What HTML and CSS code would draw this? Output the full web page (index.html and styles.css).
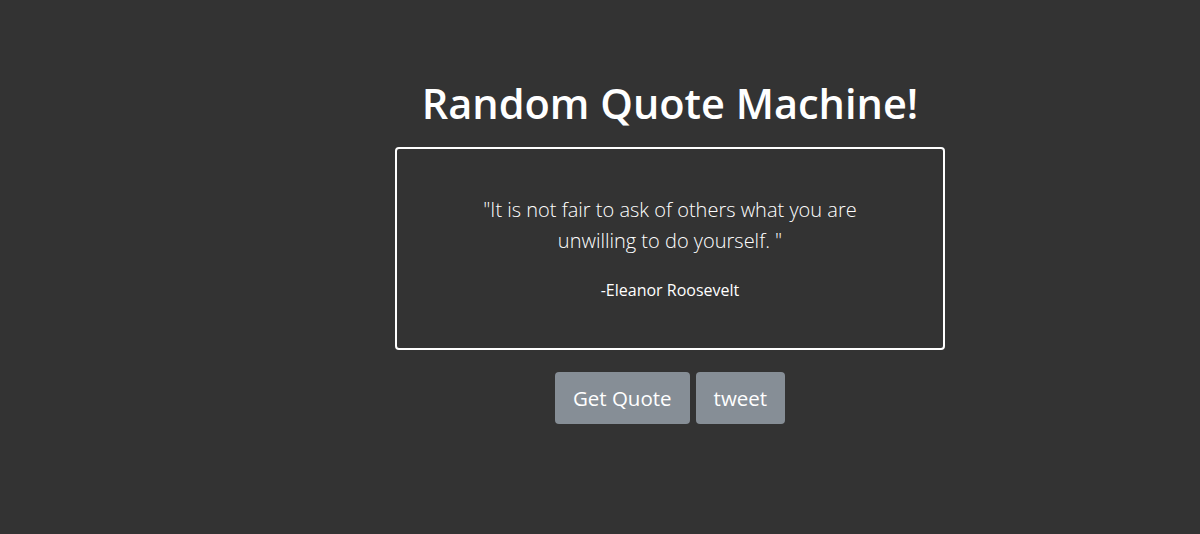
FILE: index.html
```html
<!DOCTYPE html>
<html>
<head>
<meta charset="utf-8">
<link rel="stylesheet" href="styles.css">
</head>
<body>
<main class="page">
  <div class="column">
    <h1 class="title">Random Quote Machine!</h1>
    <div class="quote-box">
      <p class="quote-text">"It is not fair to ask of others what you are unwilling to do yourself. "</p>
      <p class="quote-author">-Eleanor Roosevelt</p>
    </div>
    <div class="actions">
      <button class="btn">Get Quote</button>
      <button class="btn">tweet</button>
    </div>
  </div>
</main>
</body>
</html>
```

FILE: styles.css
```css
html, body {
  margin: 0;
  padding: 0;
  background: #333333;
  height: 100%;
}
body {
  font-family: "Open Sans", "Noto Sans", sans-serif;
  color: #ffffff;
}
.page {
  padding-top: 73px;
  padding-left: 395px;
}
.column {
  width: 550px;
  display: flex;
  flex-direction: column;
  align-items: center;
}
.title {
  margin: 0 0 14px;
  font-size: 41.5px;
  font-weight: 600;
  line-height: 60px;
}
.quote-box {
  box-sizing: border-box;
  width: 550px;
  height: 203px;
  border: 2px solid #ffffff;
  border-radius: 4px;
  padding: 45px 70px 0;
  text-align: center;
}
.quote-text {
  margin: 0;
  font-size: 20px;
  font-weight: 300;
  line-height: 31px;
}
.quote-author {
  margin: 22px 0 0;
  font-size: 16px;
  line-height: 24px;
}
.actions {
  margin-top: 22px;
  display: flex;
  gap: 6px;
}
.btn {
  font-family: inherit;
  font-size: 20.5px;
  color: #ffffff;
  background: #868e96;
  border: none;
  border-radius: 4px;
  height: 52px;
  padding: 0 18px;
  cursor: pointer;
}
```
